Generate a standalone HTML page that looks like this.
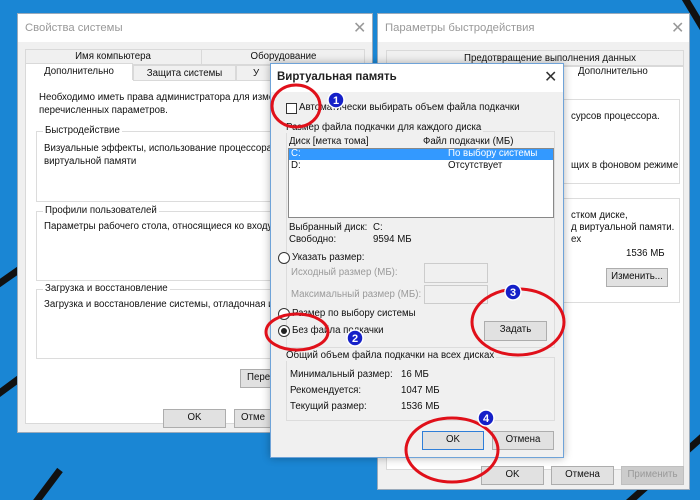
<!DOCTYPE html>
<html><head><meta charset="utf-8"><style>
*{margin:0;padding:0;box-sizing:border-box}
body{width:700px;height:500px;overflow:hidden;position:relative;background:#1a86d4;font-family:"Liberation Sans","DejaVu Sans",sans-serif;font-size:9.7px;color:#111}
.a{position:absolute;white-space:nowrap}
.win{position:absolute;background:#f0f0f0;border:1px solid #9ab}
.tb{position:absolute;left:0;right:0;top:0;height:28px;background:#fff}
.btn{position:absolute;background:#e1e1e1;border:1px solid #adadad;text-align:center;line-height:16px}
.gb{position:absolute;border:1px solid #dcdcdc}
.g{color:#9a9a9a}
</style></head><body>
<svg class="a" style="left:0;top:0" width="700" height="500">
<path d="M-10 290 L30 262" stroke="#111" stroke-width="7"/>
<path d="M-10 400 L20 378" stroke="#111" stroke-width="7"/>
<path d="M30 510 L60 470" stroke="#111" stroke-width="7"/>
<path d="M680 -10 L710 40" stroke="#111" stroke-width="7"/>
<path d="M620 510 L710 430" stroke="#111" stroke-width="7"/>
</svg>

<div class="win" style="left:17px;top:13px;width:356px;height:420px">
<div class="tb"></div>
<div class="a" style="left:7px;top:8px;font-size:11.3px;color:#999">Свойства системы</div>
<div class="a" style="left:335px;top:4px;font-size:16px;color:#999">✕</div>
<div class="a" style="left:7px;top:35px;width:340px;height:16px;border:1px solid #d9d9d9;background:#f0f0f0"></div>
<div class="a" style="left:7px;top:35px;width:177px;height:16px;border-right:1px solid #d9d9d9;text-align:center;line-height:15px">Имя компьютера</div>
<div class="a" style="left:184px;top:35px;width:163px;height:16px;text-align:center;line-height:15px">Оборудование</div>
<div class="a" style="left:7px;top:50px;width:340px;height:360px;background:#fff;border:1px solid #d9d9d9"></div>
<div class="a" style="left:7px;top:49px;width:108px;height:17px;background:#fff;border:1px solid #d9d9d9;border-bottom:none;text-align:center;line-height:16px">Дополнительно</div>
<div class="a" style="left:115px;top:51px;width:103px;height:16px;background:#f0f0f0;border:1px solid #d9d9d9;text-align:center;line-height:15px">Защита системы</div>
<div class="a" style="left:218px;top:51px;width:40px;height:16px;background:#f0f0f0;border:1px solid #d9d9d9;line-height:15px;padding-left:16px">У</div>
<div class="a" style="left:21px;top:77px;line-height:13px">Необходимо иметь права администратора для изме<br>перечисленных параметров.</div>
<div class="gb" style="left:18px;top:117px;width:330px;height:71px;background:#fff"></div>
<div class="a" style="left:25px;top:111px;background:#fff;padding:0 2px">Быстродействие</div>
<div class="a" style="left:26px;top:128px;line-height:13px">Визуальные эффекты, использование процессора<br>виртуальной памяти</div>
<div class="gb" style="left:18px;top:197px;width:330px;height:70px;background:#fff"></div>
<div class="a" style="left:25px;top:191px;background:#fff;padding:0 2px">Профили пользователей</div>
<div class="a" style="left:26px;top:207px">Параметры рабочего стола, относящиеся ко входу</div>
<div class="gb" style="left:18px;top:275px;width:330px;height:70px;background:#fff"></div>
<div class="a" style="left:25px;top:269px;background:#fff;padding:0 2px">Загрузка и восстановление</div>
<div class="a" style="left:26px;top:285px">Загрузка и восстановление системы, отладочная и</div>
<div class="btn" style="left:222px;top:355px;width:40px;height:19px;text-align:left;padding-left:6px">Пере</div>
<div class="btn" style="left:145px;top:395px;width:63px;height:19px">OK</div>
<div class="btn" style="left:216px;top:395px;width:40px;height:19px;text-align:left;padding-left:6px">Отме</div>
</div>

<div class="win" style="left:377px;top:13px;width:313px;height:477px">
<div class="tb"></div>
<div class="a" style="left:7px;top:8px;font-size:11.3px;color:#999">Параметры быстродействия</div>
<div class="a" style="left:293px;top:4px;font-size:16px;color:#999">✕</div>
<div class="a" style="left:8px;top:36px;width:298px;height:16px;border:1px solid #d9d9d9;text-align:center;line-height:15px;padding-left:30px">Предотвращение выполнения данных</div>
<div class="a" style="left:8px;top:52px;width:298px;height:404px;background:#fff;border:1px solid #d9d9d9"></div>
<div class="a" style="left:200px;top:52px">Дополнительно</div>
<div class="gb" style="left:180px;top:85px;width:122px;height:85px"></div>
<div class="a" style="left:193px;top:97px">сурсов процессора.</div>
<div class="a" style="left:193px;top:146px">щих в фоновом режиме</div>
<div class="gb" style="left:180px;top:184px;width:122px;height:105px"></div>
<div class="a" style="left:193px;top:196px;line-height:12px">стком диске,<br>д виртуальной памяти.<br>ex</div>
<div class="a" style="left:248px;top:234px">1536 МБ</div>
<div class="btn" style="left:228px;top:254px;width:62px;height:19px">Изменить...</div>
<div class="btn" style="left:103px;top:452px;width:63px;height:19px">OK</div>
<div class="btn" style="left:173px;top:452px;width:63px;height:19px">Отмена</div>
<div class="btn" style="left:243px;top:452px;width:63px;height:19px;color:#999;background:#ccc;border-color:#bfbfbf">Применить</div>
</div>

<div class="win" style="left:270px;top:63px;width:294px;height:395px;border-color:#6fa3d8;box-shadow:0 0 8px rgba(0,0,0,.3)">
<div class="tb"></div>
<div class="a" style="left:6px;top:7px;font-size:11.5px;font-weight:bold;color:#222">Виртуальная память</div>
<div class="a" style="left:273px;top:3px;font-size:16px;color:#333">✕</div>
<div class="a" style="left:15px;top:39px;width:11px;height:11px;border:1px solid #333;background:#fff"></div>
<div class="a" style="left:28px;top:38px">Автоматически выбирать объем файла подкачки</div>
<div class="gb" style="left:15px;top:67px;width:269px;height:217px"></div>
<div class="a" style="left:15px;top:58px;background:#f0f0f0;padding-right:2px">Размер файла подкачки для каждого диска</div>
<div class="a" style="left:18px;top:72px">Диск [метка тома]</div>
<div class="a" style="left:152px;top:72px">Файл подкачки (МБ)</div>
<div class="a" style="left:17px;top:84px;width:266px;height:70px;background:#fff;border:1px solid #888"></div>
<div class="a" style="left:18px;top:85px;width:264px;height:11px;background:#3399ff"></div>
<div class="a" style="left:20px;top:84px;color:#fff;line-height:12px">C:</div>
<div class="a" style="left:177px;top:84px;color:#fff;line-height:12px">По выбору системы</div>
<div class="a" style="left:20px;top:96px;line-height:12px">D:</div>
<div class="a" style="left:177px;top:96px;line-height:12px">Отсутствует</div>
<div class="a" style="left:18px;top:158px">Выбранный диск:</div><div class="a" style="left:102px;top:158px">C:</div>
<div class="a" style="left:18px;top:170px">Свободно:</div><div class="a" style="left:102px;top:170px">9594 МБ</div>
<div class="a" style="left:7px;top:188px;width:12px;height:12px;border:1px solid #333;border-radius:50%;background:#fff"></div>
<div class="a" style="left:21px;top:188px">Указать размер:</div>
<div class="a g" style="left:20px;top:203px">Исходный размер (МБ):</div>
<div class="a" style="left:153px;top:199px;width:64px;height:20px;border:1px solid #ccc"></div>
<div class="a g" style="left:20px;top:225px">Максимальный размер (МБ):</div>
<div class="a" style="left:153px;top:221px;width:64px;height:19px;border:1px solid #ccc"></div>
<div class="a" style="left:7px;top:244px;width:12px;height:12px;border:1px solid #333;border-radius:50%;background:#fff"></div>
<div class="a" style="left:21px;top:244px">Размер по выбору системы</div>
<div class="a" style="left:7px;top:261px;width:12px;height:12px;border:1px solid #333;border-radius:50%;background:#fff"><div class="a" style="left:2px;top:2px;width:6px;height:6px;border-radius:50%;background:#222"></div></div>
<div class="a" style="left:21px;top:261px">Без файла подкачки</div>
<div class="btn" style="left:213px;top:257px;width:63px;height:20px">Задать</div>
<div class="gb" style="left:15px;top:293px;width:269px;height:64px"></div>
<div class="a" style="left:15px;top:286px;background:#f0f0f0;padding-right:2px">Общий объем файла подкачки на всех дисках</div>
<div class="a" style="left:19px;top:305px">Минимальный размер:</div><div class="a" style="left:130px;top:305px">16 МБ</div>
<div class="a" style="left:19px;top:321px">Рекомендуется:</div><div class="a" style="left:130px;top:321px">1047 МБ</div>
<div class="a" style="left:19px;top:337px">Текущий размер:</div><div class="a" style="left:130px;top:337px">1536 МБ</div>
<div class="btn" style="left:151px;top:367px;width:62px;height:19px;border-color:#2f7ed8">OK</div>
<div class="btn" style="left:221px;top:367px;width:62px;height:19px">Отмена</div>
</div>

<svg class="a" style="left:0;top:0" width="700" height="500">
<g fill="none" stroke="#e0101a" stroke-width="3">
<ellipse cx="296" cy="106" rx="24" ry="21"/>
<ellipse cx="297" cy="332" rx="31" ry="18"/>
<ellipse cx="518" cy="322" rx="46" ry="33"/>
<ellipse cx="452" cy="450" rx="46" ry="32"/>
</g>
<g font-family="Liberation Sans" font-weight="bold" font-size="11" fill="#fff" text-anchor="middle">
<circle cx="336" cy="100" r="8" fill="#1520c8" stroke="#fff" stroke-width="1.5"/><text x="336" y="104">1</text>
<circle cx="355" cy="338" r="8" fill="#1520c8" stroke="#fff" stroke-width="1.5"/><text x="355" y="342">2</text>
<circle cx="513" cy="292" r="8" fill="#1520c8" stroke="#fff" stroke-width="1.5"/><text x="513" y="296">3</text>
<circle cx="486" cy="418" r="8" fill="#1520c8" stroke="#fff" stroke-width="1.5"/><text x="486" y="422">4</text>
</g>
</svg>
</body></html>
